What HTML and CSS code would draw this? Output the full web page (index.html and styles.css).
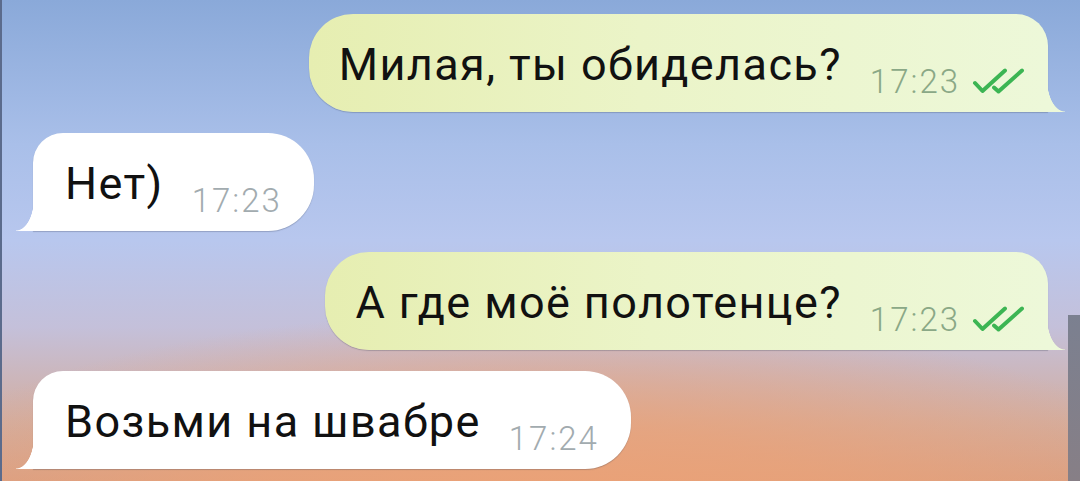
FILE: index.html
```html
<!DOCTYPE html>
<html lang="ru">
<head>
    <meta charset="UTF-8">
    <title>Чат</title>
    <link rel="stylesheet" href="styles.css">
</head>
<body>
    <div class="screen">
        <div class="chat">
            <div class="row out">
                <div class="msg out">
                    <span class="text">Милая, ты обиделась?</span>
                    <span class="time">17:23</span>
                    <svg class="ticks" viewBox="0 0 52 27" width="52" height="27">
                        <path d="M3 15 L10.5 23 L33 2.5" />
                        <path d="M22 19.5 L26.5 23.5 L50 2.5" />
                    </svg>
                </div>
            </div>
            <div class="row in">
                <div class="msg in">
                    <span class="text">Нет)</span>
                    <span class="time">17:23</span>
                </div>
            </div>
            <div class="row out">
                <div class="msg out">
                    <span class="text">А где моё полотенце?</span>
                    <span class="time">17:23</span>
                    <svg class="ticks" viewBox="0 0 52 27" width="52" height="27">
                        <path d="M3 15 L10.5 23 L33 2.5" />
                        <path d="M22 19.5 L26.5 23.5 L50 2.5" />
                    </svg>
                </div>
            </div>
            <div class="row in">
                <div class="msg in">
                    <span class="text">Возьми на швабре</span>
                    <span class="time">17:24</span>
                </div>
            </div>
        </div>
        <!-- scroll handle on the right edge -->
        <div class="handle"></div>
    </div>
</body>
</html>
```

FILE: styles.css
```css
body {
    margin: 0;
    padding: 0;
    font-family: Roboto, "Noto Sans", sans-serif;
    overflow: hidden;
}

.screen {
    position: relative;
    width: 1080px;
    height: 481px;
    box-sizing: border-box;
    border-left: 2px solid #5b6b8c;
    overflow: hidden;
    background:
        radial-gradient(ellipse 680px 210px at 50% 108%, rgba(236, 162, 118, 1) 0%, rgba(236, 162, 118, 0.7) 45%, rgba(236, 162, 118, 0) 100%),
        linear-gradient(180deg, #8aa9d9 0%, #a9bfe9 30%, #b8c7ee 50%, #c4c0da 68%, #d3ad9f 88%, #d9a084 100%);
}

.chat {
    display: flex;
    flex-direction: column;
    gap: 21px;
    padding: 14px 32px 0 31px;
}

.row {
    display: flex;
}

.row.out {
    justify-content: flex-end;
}

.row.in {
    justify-content: flex-start;
}

.msg {
    position: relative;
    display: flex;
    align-items: flex-start;
    height: 98px;
    box-sizing: border-box;
    padding-top: 25px;
    box-shadow: 0 1px 1px rgba(40, 50, 70, 0.25);
}

.msg.out {
    background: linear-gradient(90deg, #e6eeb1 0%, #ebf4c8 45%, #edf8d9 100%);
    border-radius: 44px 32px 0 44px;
    padding-left: 30px;
    padding-right: 24px;
}

.msg.in {
    background-color: #fff;
    border-radius: 30px 46px 46px 0;
    padding-left: 32px;
    padding-right: 32px;
}

/* tails */
.msg.out::after,
.msg.in::after {
    content: "";
    position: absolute;
    bottom: 0;
    width: 18px;
    height: 32px;
}

.msg.out::after {
    right: -17px;
    background-color: #edf8d9;
    -webkit-mask: radial-gradient(ellipse 18px 32px at 100% 0, transparent 97%, #000 100%);
    mask: radial-gradient(ellipse 18px 32px at 100% 0, transparent 97%, #000 100%);
}

.msg.in::after {
    left: -17px;
    background-color: #fff;
    -webkit-mask: radial-gradient(ellipse 18px 32px at 0 0, transparent 97%, #000 100%);
    mask: radial-gradient(ellipse 18px 32px at 0 0, transparent 97%, #000 100%);
}

.text {
    font-size: 45px;
    line-height: 52px;
    letter-spacing: 1.4px;
    color: #111;
}

.time {
    font-size: 33px;
    font-weight: 300;
    line-height: 32px;
    letter-spacing: 2px;
    margin-top: 27px;
    margin-left: 28px;
}

.msg.out .time {
    color: #8aa886;
}

.msg.in .time {
    color: #a2abaf;
}

.ticks {
    margin-top: 29px;
    margin-left: 12px;
    fill: none;
    stroke: #3cb553;
    stroke-width: 4;
    stroke-linecap: round;
    stroke-linejoin: round;
}

.handle {
    position: absolute;
    right: 0;
    top: 315px;
    width: 12px;
    height: 166px;
    background: linear-gradient(180deg, #7b8090 0%, #877f86 100%);
}
```
